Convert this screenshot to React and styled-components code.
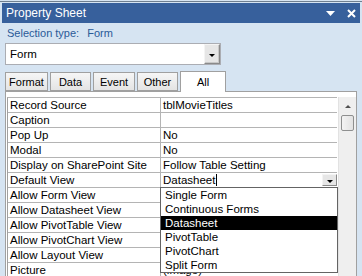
import React from 'react';
import styled, { createGlobalStyle } from 'styled-components';

const GlobalStyle = createGlobalStyle`
  body {
    margin: 0;
    font-family: "Liberation Sans", Arial, sans-serif;
  }
`

const Frame = styled.div`
  width: 362px;
  height: 276px;
  overflow: hidden;
  background: #d6e4f2;
  display: flex;
  flex-direction: column;
`
const TopStrip = styled.div`
  height: 3px;
  background: linear-gradient(#d6e4f2 0 1px, #6f7f90 1px 2px, #d6e4f2 2px);
  flex: none;
`
const TitleBar = styled.div`
  height: 20px;
  margin: 0 2px 0 2px;
  background: #37609c;
  color: #fff;
  display: flex;
  align-items: center;
  padding: 0 4px 0 4px;
  font-size: 12px;
  flex: none;
`
const Title = styled.span`
  flex: 1;
`
const TitleIcons = styled.div`
  display: flex;
  align-items: center;
  gap: 12px;
`
const SelectionLabel = styled.div`
  height: 20px;
  padding-left: 7px;
  display: flex;
  align-items: center;
  color: #2a5a98;
  font-size: 11px;
  gap: 8px;
  flex: none;
`
const Combo = styled.div`
  margin: 0 0 0 5px;
  width: 210px;
  height: 20px;
  border: 1px solid #abadb3;
  background: #fff;
  display: flex;
  align-items: center;
  justify-content: space-between;
  font-size: 11.5px;
  padding-left: 4px;
  flex: none;
`
const ComboButton = styled.div`
  width: 14px;
  height: 18px;
  border: 1px solid #8a8a8a;
  border-top-color: #f4f4f4;
  border-left-color: #f4f4f4;
  box-shadow: inset -1px -1px 0 #c8c8c8;
  background: #e6e6e6;
  display: flex;
  align-items: center;
  justify-content: center;
`
const Caret = styled.div`
  width: 0;
  height: 0;
  border-left: 3px solid transparent;
  border-right: 3px solid transparent;
  border-top: 3px solid #000;
  margin-top: 2px;
`
const Tabs = styled.div`
  margin-top: 5px;
  padding-left: 5px;
  height: 21px;
  display: flex;
  align-items: flex-end;
  gap: 2px;
  flex: none;
`
const Tab = styled.div`
  width: ${p => p.w}px;
  height: ${p => (p.active ? 21 : 19)}px;
  box-sizing: border-box;
  border: 1px solid #a0a0a0;
  border-bottom: ${p => (p.active ? 'none' : '1px solid #a0a0a0')};
  background: ${p => (p.active ? '#fff' : 'linear-gradient(#f6f6f6, #e4e4e4)')};
  font-size: 11px;
  display: flex;
  align-items: center;
  justify-content: center;
  margin-bottom: ${p => (p.active ? '-1px' : '0')};
  position: relative;
  z-index: 1;
`
const Panel = styled.div`
  flex: 1;
  margin: 0 5px 0 5px;
  background: #fff;
  border: 1px solid #a0a0a0;
  border-bottom: none;
  padding: 5px 0 0 1px;
  display: flex;
  min-height: 0;
`
const Grid = styled.div`
  width: 331px;
  border-left: 1px solid #a0a0a0;
  border-top: 1px solid #b4b4b4;
  align-self: flex-start;
`
const Row = styled.div`
  display: grid;
  grid-template-columns: 152px 1fr;
  height: 15px;
  box-sizing: border-box;
  border-bottom: 1px solid #b4b4b4;
  font-size: 11.5px;
`
const Label = styled.div`
  padding-left: 2px;
  line-height: 14px;
  white-space: nowrap;
  overflow: hidden;
`
const Value = styled.div`
  border-left: 1px solid #b4b4b4;
  padding-left: 2px;
  line-height: 14px;
  white-space: nowrap;
  position: relative;
  display: flex;
  align-items: center;
`
const TextCursor = styled.span`
  display: inline-block;
  width: 1px;
  height: 12px;
  background: #000;
  margin-left: 1px;
`
const CellButton = styled.div`
  position: absolute;
  right: 0;
  top: 1px;
  width: 15px;
  height: 12px;
  box-sizing: border-box;
  border: 1px solid #8a8a8a;
  border-top-color: #f4f4f4;
  border-left-color: #f4f4f4;
  background: #e6e6e6;
  display: flex;
  align-items: center;
  justify-content: center;
`
const DropList = styled.ul`
  position: absolute;
  left: -1px;
  top: 14px;
  width: 176px;
  margin: 0;
  padding: 0;
  list-style: none;
  background: #fff;
  border: 1px solid #646464;
  z-index: 2;
`
const Option = styled.li`
  height: 14px;
  line-height: 14px;
  padding-left: 4px;
  background: ${p => (p.selected ? '#000' : 'transparent')};
  color: ${p => (p.selected ? '#fff' : '#000')};
  font-size: 11.5px;
`
const Scrollbar = styled.div`
  width: 17px;
  margin-left: 1px;
  background: #efefef;
  border-left: 1px solid #e2e2e2;
  display: flex;
  flex-direction: column;
  align-items: center;
`
const ScrollUp = styled.div`
  height: 18px;
  display: flex;
  align-items: center;
  justify-content: center;
`
const UpArrow = styled.div`
  width: 0;
  height: 0;
  border-left: 3px solid transparent;
  border-right: 3px solid transparent;
  border-bottom: 3px solid #505050;
`
const Thumb = styled.div`
  width: 13px;
  height: 16px;
  border: 1px solid #8e8f8f;
  border-radius: 2px;
  background: linear-gradient(90deg, #f3f3f3, #e2e2e2);
  box-sizing: border-box;
`

// values under the open list are covered, so they stay empty
const rows = [
  ['Record Source', 'tblMovieTitles'],
  ['Caption', ''],
  ['Pop Up', 'No'],
  ['Modal', 'No'],
  ['Display on SharePoint Site', 'Follow Table Setting'],
  ['Default View', 'Datasheet'],
  ['Allow Form View', ''],
  ['Allow Datasheet View', ''],
  ['Allow PivotTable View', ''],
  ['Allow PivotChart View', ''],
  ['Allow Layout View', ''],
  ['Picture', '(image)'],
]

const views = ['Single Form', 'Continuous Forms', 'Datasheet', 'PivotTable', 'PivotChart', 'Split Form']

const tabs = [
  ['Format', 43],
  ['Data', 41],
  ['Event', 42],
  ['Other', 41],
  ['All', 46],
]

function App() {
  return (
    <Frame>
      <GlobalStyle />
      <TopStrip />
      <TitleBar>
        <Title>Property Sheet</Title>
        <TitleIcons>
          <svg width="9" height="5" viewBox="0 0 9 5"><path d="M0 0h9L4.5 5z" fill="#fff" /></svg>
          <svg width="9" height="9" viewBox="0 0 9 9">
            <path d="M1 1l7 7M8 1L1 8" stroke="#fff" strokeWidth="2" />
          </svg>
        </TitleIcons>
      </TitleBar>
      <SelectionLabel>
        <span>Selection type:</span>
        <span>Form</span>
      </SelectionLabel>
      <Combo>
        Form
        <ComboButton><Caret /></ComboButton>
      </Combo>
      <Tabs>
        {tabs.map(([name, w]) => (
          <Tab key={name} w={w} active={name === 'All'}>{name}</Tab>
        ))}
      </Tabs>
      <Panel>
        <Grid>
          {rows.map(([label, value]) => (
            <Row key={label}>
              <Label>{label}</Label>
              {label === 'Default View' ? (
                <Value>
                  {value}<TextCursor />
                  <CellButton><Caret /></CellButton>
                  <DropList>
                    {views.map(v => (
                      <Option key={v} selected={v === 'Datasheet'}>{v}</Option>
                    ))}
                  </DropList>
                </Value>
              ) : (
                <Value>{value}</Value>
              )}
            </Row>
          ))}
        </Grid>
        <Scrollbar>
          <ScrollUp><UpArrow /></ScrollUp>
          <Thumb />
        </Scrollbar>
      </Panel>
    </Frame>
  )
}

export default App
